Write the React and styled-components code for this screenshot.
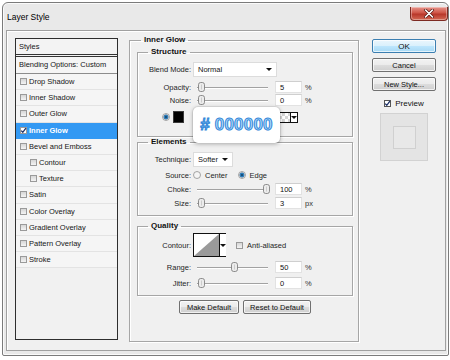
import React from "react"
import styled, { createGlobalStyle } from "styled-components"

const GlobalStyle = createGlobalStyle`
  * { box-sizing: border-box; }
  html, body { margin: 0; padding: 0; background: #ffffff; }
  body {
    font-family: "Liberation Sans", Arial, sans-serif;
    font-size: 7.5px;
    color: #161616;
  }
`

const styleRows = [
  { name: "Drop Shadow" },
  { name: "Inner Shadow" },
  { name: "Outer Glow" },
  { name: "Inner Glow", active: true },
  { name: "Bevel and Emboss" },
  { name: "Contour", indent: true },
  { name: "Texture", indent: true },
  { name: "Satin" },
  { name: "Color Overlay" },
  { name: "Gradient Overlay" },
  { name: "Pattern Overlay" },
  { name: "Stroke" },
]

function CheckMark({ color }) {
  return (
    <svg width="7" height="7" viewBox="0 0 7 7">
      <path d="M1.2 3.6 L2.8 5.3 L5.9 1.2" fill="none" stroke={color} strokeWidth="1.3" />
    </svg>
  )
}

function Radio({ checked }) {
  return (
    <RadioBox>
      <svg width="8" height="8" viewBox="0 0 8 8">
        <circle cx="4" cy="4" r="3.5" fill="#f4f4f4" stroke="#8f8f8f" strokeWidth="0.8" />
        {checked && <circle cx="4" cy="4" r="2.2" fill="#2f8fd8" stroke="#1b4f7a" strokeWidth="0.6" />}
        {checked && <circle cx="4" cy="4" r="0.9" fill="#10324f" />}
      </svg>
    </RadioBox>
  )
}

function Thumb() {
  return (
    <svg width="7" height="10" viewBox="0 0 7 10">
      <rect x="0.5" y="0.5" width="6" height="9" rx="2.2" fill="#ececec" stroke="#808080" strokeWidth="0.9" />
      <line x1="3.5" y1="2.5" x2="3.5" y2="7.5" stroke="#c4c4c4" strokeWidth="0.8" />
    </svg>
  )
}

function Slider({ value }) {
  return (
    <SliderBox>
      <Track />
      <ThumbSpot style={{ left: 4 + value * 0.65 }}>
        <Thumb />
      </ThumbSpot>
    </SliderBox>
  )
}

function SliderRow({ label, value, text, unit, mt }) {
  return (
    <Row $h={12} $mt={mt}>
      <Label>{label}</Label>
      <Slider value={value} />
      <Field>{text}</Field>
      <Unit>{unit}</Unit>
    </Row>
  )
}

function App() {
  return (
    <Page>
      <GlobalStyle />
      <Window>
        <TitleBar>
          <Title>Layer Style</Title>
          <CloseButton>
            <svg width="12" height="9" viewBox="0 0 12 9">
              <path d="M2.5 1 L9.5 8 M9.5 1 L2.5 8" stroke="#5a1a14" strokeWidth="3" strokeLinecap="round" />
              <path d="M2.5 1 L9.5 8 M9.5 1 L2.5 8" stroke="#ffffff" strokeWidth="1.6" strokeLinecap="round" />
            </svg>
          </CloseButton>
        </TitleBar>

        <Body>
          <StylesList>
            <ListHeader>Styles</ListHeader>
            <BlendRow>Blending Options: Custom</BlendRow>
            {styleRows.map((r) => (
              <StyleRow key={r.name} $active={r.active} $indent={r.indent}>
                <Check $checked={r.active}>{r.active && <CheckMark color="#1a2f66" />}</Check>
                {r.name}
              </StyleRow>
            ))}
          </StylesList>

          <MainGroup>
            <Legend $ml={4}>Inner Glow</Legend>

            <Group $h={90} $mt={2}>
              <Legend $ml={10}>Structure</Legend>
              <Row $h={15} $mt={5}>
                <Label>Blend Mode:</Label>
                <Select $w={84}>
                  Normal
                  <Arrow />
                </Select>
              </Row>
              <SliderRow label="Opacity:" value={0} text="5" unit="%" mt={4} />
              <SliderRow label="Noise:" value={0} text="0" unit="%" mt={1} />
              <ColorRow>
                <Radio checked />
                <Swatch />
                <GradientPick>
                  <Checker />
                  <PickArrow>
                    <Arrow />
                  </PickArrow>
                </GradientPick>
                <Callout>
                  <HexText># 000000</HexText>
                </Callout>
              </ColorRow>
            </Group>

            <Group $h={79}>
              <Legend $ml={10}>Elements</Legend>
              <Row $h={15} $mt={5}>
                <Label>Technique:</Label>
                <Select $w={40}>
                  Softer
                  <Arrow />
                </Select>
              </Row>
              <Row $h={12} $mt={2}>
                <Label>Source:</Label>
                <Option>
                  <Radio />
                  Center
                </Option>
                <Option>
                  <Radio checked />
                  Edge
                </Option>
              </Row>
              <SliderRow label="Choke:" value={100} text="100" unit="%" mt={2} />
              <SliderRow label="Size:" value={0} text="3" unit="px" mt={2} />
            </Group>

            <Group $h={75} $mt={5}>
              <Legend $ml={10}>Quality</Legend>
              <Row $h={24} $mt={2}>
                <Label>Contour:</Label>
                <ContourPick>
                  <ContourCurve>
                    <svg width="25" height="22" viewBox="0 0 25 22">
                      <polygon points="0,22 25,0 25,22" fill="#9a9a9a" />
                    </svg>
                  </ContourCurve>
                  <PickArrow>
                    <Arrow />
                  </PickArrow>
                </ContourPick>
                <Option $gap={10}>
                  <Check />
                  Anti-aliased
                </Option>
              </Row>
              <SliderRow label="Range:" value={50} text="50" unit="%" mt={4} />
              <SliderRow label="Jitter:" value={0} text="0" unit="%" mt={4} />
            </Group>

            <ButtonRow>
              <Button $w={60}>Make Default</Button>
              <Button $w={68}>Reset to Default</Button>
            </ButtonRow>
          </MainGroup>

          <SideColumn>
            <Button $primary $w={64}>OK</Button>
            <Button $w={64}>Cancel</Button>
            <Button $w={64}>New Style...</Button>
            <PreviewToggle>
              <Check $checked $dark>
                <CheckMark color="#1a2f66" />
              </Check>
              Preview
            </PreviewToggle>
            <PreviewBox>
              <PreviewInner />
            </PreviewBox>
          </SideColumn>
        </Body>
      </Window>
    </Page>
  )
}

const Page = styled.div`
  width: 450px;
  height: 360px;
  padding: 2px 1px 0 2px;
  overflow: hidden;
`
const Window = styled.div`
  width: 447px;
  height: 354px;
  display: flex;
  flex-direction: column;
  padding: 0 2px 4px 3px;
  border: 1px solid #7b7b7b;
  border-radius: 6px 6px 2px 2px;
  background: #e9e9e9;
  box-shadow: inset 0 0 0 1px #fafafa;
`
const TitleBar = styled.div`
  height: 27px;
  display: flex;
  align-items: center;
  justify-content: space-between;
  padding-left: 1px;
`
const Title = styled.div`
  font-size: 8.5px;
  color: #000;
`
const CloseButton = styled.div`
  align-self: flex-start;
  width: 38px;
  height: 14px;
  margin: 4px -2px 0 0;
  display: flex;
  align-items: center;
  justify-content: center;
  border: 1px solid #7d2a22;
  border-top: none;
  border-radius: 0 0 4px 4px;
  background: linear-gradient(#e7958c, #cf5647 45%, #b8372a 55%, #d46a55);
  box-shadow: inset 0 0 0 1px rgba(255, 255, 255, 0.35);
`
const Body = styled.div`
  flex: 1;
  display: flex;
  align-items: flex-start;
  padding: 4px 0 0 8px;
  border: 1px solid #a0a0a0;
  background: #f0f0f0;
  box-shadow: inset 1px 1px 0 #ffffff;
`
const StylesList = styled.div`
  width: 103px;
  height: 302px;
  margin-top: 3px;
  display: flex;
  flex-direction: column;
  border: 1px solid #2e2e2e;
  background: #f1f1f1;
`
const ListHeader = styled.div`
  height: 18px;
  padding: 0 0 0 3px;
  line-height: 15px;
  border-bottom: 3px double #333;
  background: #f3f3f3;
`
const BlendRow = styled.div`
  height: 17px;
  padding-left: 3px;
  line-height: 16px;
  border-bottom: 1px solid #8c8c8c;
  background: #f5f5f5;
`
const StyleRow = styled.div`
  height: 16.2px;
  display: flex;
  align-items: center;
  gap: 2px;
  padding-left: ${(p) => (p.$indent ? 14 : 4)}px;
  border-bottom: 1px solid ${(p) => (p.$active ? "#3399f3" : "#e3e3e3")};
  background: ${(p) => (p.$active ? "#3399f3" : "#f5f5f5")};
  color: ${(p) => (p.$active ? "#ffffff" : "#161616")};
  font-weight: ${(p) => (p.$active ? "bold" : "normal")};
`
const Check = styled.span`
  width: 7px;
  height: 7px;
  flex: none;
  display: flex;
  align-items: center;
  justify-content: center;
  border: 1px solid ${(p) => (p.$dark ? "#555" : "#9a9a9a")};
  background: ${(p) => (p.$checked ? "#ffffff" : "linear-gradient(#d6d6d6, #f4f4f4)")};
  svg {
    margin: -1px;
    flex: none;
  }
`
const MainGroup = styled.fieldset`
  width: 230px;
  height: 307px;
  margin: 0 0 0 11px;
  padding: 0 5px 0 7px;
  min-inline-size: 0;
  border: 1px solid #a6a6a6;
  box-shadow: 1px 1px 0 #ffffff, inset 1px 1px 0 #ffffff;
`
const Group = styled.fieldset`
  height: ${(p) => p.$h}px;
  margin: ${(p) => p.$mt || 0}px 0 0;
  padding: 0;
  min-inline-size: 0;
  border: 1px solid #a6a6a6;
  box-shadow: 1px 1px 0 #ffffff, inset 1px 1px 0 #ffffff;
`
const Legend = styled.legend`
  margin-left: ${(p) => p.$ml}px;
  padding: 0 3px;
  font-size: 8px;
  line-height: 10px;
  font-weight: bold;
  color: #111;
`
const Row = styled.div`
  height: ${(p) => p.$h}px;
  margin-top: ${(p) => p.$mt || 0}px;
  display: flex;
  align-items: center;
`
const Label = styled.div`
  width: 53px;
  flex: none;
  text-align: right;
  margin-right: 2px;
  color: #1e1e1e;
`
const Select = styled.div`
  width: ${(p) => p.$w}px;
  height: 15px;
  display: flex;
  align-items: center;
  justify-content: space-between;
  padding: 0 4px 0 4px;
  border: 1px solid #dcdcdc;
  background: #ffffff;
`
const Arrow = styled.span`
  width: 0;
  height: 0;
  border-left: 3px solid transparent;
  border-right: 3px solid transparent;
  border-top: 3px solid #111;
`
const SliderBox = styled.div`
  position: relative;
  width: 76px;
  height: 12px;
  flex: none;
  margin-left: 1px;
`
const Track = styled.div`
  position: absolute;
  left: 3px;
  right: 2px;
  top: 6px;
  height: 2px;
  border-top: 1px solid #a2a2a2;
  border-bottom: 1px solid #ffffff;
`
const ThumbSpot = styled.div`
  position: absolute;
  top: 1px;
  width: 7px;
  height: 10px;
  svg {
    display: block;
  }
`
const Field = styled.div`
  width: 27px;
  height: 12px;
  margin-left: 5px;
  padding-left: 4px;
  line-height: 11px;
  border: 1px solid #e2e2e2;
  border-top-color: #cfcfcf;
  background: #ffffff;
  color: #111;
`
const Unit = styled.div`
  margin-left: 3px;
  color: #333;
`
const ColorRow = styled.div`
  position: relative;
  height: 12px;
  margin-top: 5px;
  display: flex;
  align-items: center;
  padding-left: 24px;
`
const RadioBox = styled.span`
  width: 8px;
  height: 8px;
  flex: none;
  svg {
    display: block;
  }
`
const Swatch = styled.div`
  width: 11px;
  height: 12px;
  margin-left: 3px;
  background: #000;
  border: 1px solid #3a3a3a;
`
const GradientPick = styled.div`
  height: 11px;
  margin-left: 10px;
  display: flex;
  border: 1px solid #111;
`
const Checker = styled.div`
  width: 95px;
  background-color: #ffffff;
  background-image: linear-gradient(45deg, #d6d6d6 25%, transparent 25%, transparent 75%, #d6d6d6 75%),
    linear-gradient(45deg, #d6d6d6 25%, transparent 25%, transparent 75%, #d6d6d6 75%);
  background-size: 6px 6px;
  background-position: 0 0, 3px 3px;
`
const PickArrow = styled.div`
  width: 7px;
  display: flex;
  align-items: center;
  justify-content: center;
  border-left: 1px solid #111;
  background: #ffffff;
`
const Callout = styled.div`
  position: absolute;
  left: 55px;
  top: -4px;
  width: 87px;
  height: 36px;
  display: flex;
  align-items: center;
  justify-content: center;
  border-radius: 5px;
  background: #ffffff;
  box-shadow: 0 1px 4px rgba(0, 0, 0, 0.3), 0 0 0 1px rgba(0, 0, 0, 0.06);
`
const HexText = styled.span`
  font-size: 17px;
  font-weight: bold;
  letter-spacing: 0.2px;
  color: #b5dcfb;
  -webkit-text-stroke: 1px #2f86d8;
`
const Option = styled.div`
  display: flex;
  align-items: center;
  gap: 4px;
  margin-left: ${(p) => (p.$gap != null ? p.$gap : 0)}px;
  margin-right: 10px;
  color: #1e1e1e;
`
const ContourPick = styled.div`
  width: 33px;
  height: 24px;
  display: flex;
  border: 1px solid #111;
  background: #ffffff;
`
const ContourCurve = styled.div`
  width: 25px;
  display: flex;
  align-items: flex-end;
  svg {
    display: block;
  }
`
const ButtonRow = styled.div`
  margin-top: 4px;
  display: flex;
  justify-content: center;
  gap: 4px;
`
const Button = styled.div`
  width: ${(p) => p.$w}px;
  height: 14px;
  display: flex;
  align-items: center;
  justify-content: center;
  font-size: ${(p) => (p.$primary ? 8 : 7.5)}px;
  color: #111;
  border: 1px solid ${(p) => (p.$primary ? "#3c7fb1" : "#707070")};
  border-radius: 2px;
  background: ${(p) =>
    p.$primary
      ? "linear-gradient(#eaf6fd, #d9f0fc 50%, #bee6fd 50%, #a7d9f5)"
      : "linear-gradient(#f2f2f2, #ebebeb 50%, #dddddd 50%, #cfcfcf)"};
  box-shadow: inset 0 0 0 1px rgba(255, 255, 255, 0.7);
`
const SideColumn = styled.div`
  width: 64px;
  margin: 4px 0 0 13px;
  display: flex;
  flex-direction: column;
  align-items: center;
  gap: 5px;
`
const PreviewToggle = styled.div`
  height: 12px;
  margin-top: 1px;
  display: flex;
  align-items: center;
  gap: 4px;
  font-size: 8px;
  color: #111;
`
const PreviewBox = styled.div`
  width: 48px;
  height: 48px;
  margin-top: -1px;
  display: flex;
  align-items: center;
  justify-content: center;
  border: 1px solid #d2d2d2;
  background: #e4e4e4;
`
const PreviewInner = styled.div`
  width: 23px;
  height: 23px;
  border: 1px solid #d0d0d0;
  background: #e8e8e8;
`

export default App
